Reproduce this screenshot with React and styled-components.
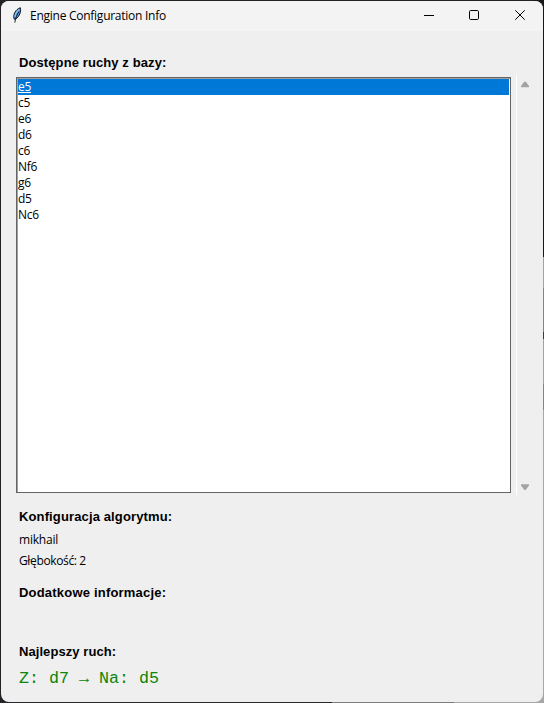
import React from "react";
import styled, { createGlobalStyle } from "styled-components";

const GlobalStyle = createGlobalStyle`
  * { box-sizing: border-box; }
  body { margin: 0; overflow: hidden; background: #242126; }
`;

const Desktop = styled.div`
  width: 544px;
  height: 703px;
  padding: 1px;
  background:
    linear-gradient(90deg, #2b282c 0 332px, #7d7d7d 332px 454px, #a6a6a6 454px) 0 702px / 544px 1px no-repeat,
    linear-gradient(#16181a 0 257px, #a2a2a2 257px 288px, #858585 288px 332px, #3a3a3a 332px 339px, #a2a2a2 339px 384px, #858585 384px 410px, #a8a8a8 410px) 534px 0 / 10px 703px no-repeat,
    #242126;
`;

const Window = styled.main`
  width: 542px;
  height: 701px;
  border-radius: 8px;
  overflow: hidden;
  background: #efefef;
  color: #000;
  font: 12px/16px "Open Sans", "Noto Sans", sans-serif;
`;

const TitleBar = styled.header`
  display: flex;
  height: 30px;
  padding: 0 0 0 10px;
  background: #f3f3f3;
`;

const Feather = styled.svg`
  flex: none;
  width: 14px;
  height: 18px;
  margin-top: 5px;
`;

const Title = styled.h1`
  flex: 1;
  margin: 0;
  padding-left: 5px;
  font-size: 12px;
  font-weight: 400;
  line-height: 30px;
  letter-spacing: -0.26px;
  white-space: nowrap;
`;

const CaptionButton = styled.button`
  display: flex;
  align-items: center;
  justify-content: center;
  flex: none;
  width: ${(p) => p.$width || 45}px;
  height: 28px;
  padding: 0;
  border: 0;
  background: transparent;
`;

const Content = styled.div`
  padding: 22px 9px 0 15px;
`;

const Heading = styled.h2`
  height: 20px;
  margin: ${(p) => p.$top || 0}px 0 0 3px;
  font: bold 13px/20px "Liberation Sans", Arial, sans-serif;
  letter-spacing: ${(p) => p.$spacing || 0}px;
`;

const ListArea = styled.div`
  display: flex;
  gap: 5px;
  height: 420px;
  margin-top: 2px;
`;

const ListBox = styled.ul`
  flex: none;
  width: 495px;
  height: 416px;
  margin: 2px 0 0;
  padding: 0 1px 1px 0;
  list-style: none;
  background: #fff;
  border: 1px solid #646464;
  box-shadow: inset 1px 1px #a0a0a0;
`;

const Move = styled.li`
  height: 16px;
  margin-left: 1px;
  line-height: 16px;
  letter-spacing: -0.3px;
  color: ${(p) => (p.$selected ? "#fff" : "#000")};
  background: ${(p) => (p.$selected ? "#0078d7" : "transparent")};
  text-decoration: ${(p) => (p.$selected ? "underline" : "none")};
  text-underline-offset: 1px;
  &:first-child { margin-top: 1px; }
`;

const ScrollBar = styled.div`
  display: flex;
  flex: none;
  flex-direction: column;
  justify-content: space-between;
  width: 17px;
  padding: 6px 0 4px 3px;
  border-left: 1px solid #fff;
`;

const Arrow = styled.svg`
  width: 10px;
  height: 7px;
  fill: #a3a3a3;
`;

const Details = styled.div`
  padding: 2px 0 0 3px;
`;

const Detail = styled.p`
  height: 21px;
  margin: 0;
  line-height: 21px;
  letter-spacing: ${(p) => p.$spacing}px;
`;

const BestMove = styled.p`
  margin: 6px 0 0 3px;
  color: #0b850b;
  font: 16.67px/22px "Liberation Mono", "Courier New", monospace;
  white-space: pre;
`;

const moves = ["e5", "c5", "e6", "d6", "c6", "Nf6", "g6", "d5", "Nc6"];

export default function App() {
  return (
    <Desktop>
      <GlobalStyle />
      <Window>
        <TitleBar>
          <Feather viewBox="0 0 14 18">
            <path d="M3.2 13.2C1.6 8.5 4.5 3.5 9.3 1.7C10.3 5.8 8.6 10.4 4.6 13Z" fill="#4b93da" stroke="#10151d" strokeWidth="1" />
            <path d="M8.2 3.4C6 5.2 4.3 8.2 4 11" fill="none" stroke="#8fc1ef" strokeWidth="1.3" />
            <path d="M8 5.5C5.8 8.8 4.6 12 3.8 16.6" fill="none" stroke="#0c0f14" strokeWidth="0.9" />
          </Feather>
          <Title>Engine Configuration Info</Title>
          <CaptionButton aria-label="Minimize">
            <svg width="11" height="10"><path d="M1 5.5h10" stroke="#000" /></svg>
          </CaptionButton>
          <CaptionButton aria-label="Maximize" $width={47}>
            <svg width="11" height="10"><rect x=".5" y=".5" width="9" height="9" rx="1.2" fill="none" stroke="#000" /></svg>
          </CaptionButton>
          <CaptionButton aria-label="Close">
            <svg width="11" height="10"><path d="M.3.3l9.4 9.4M9.7.3L.3 9.7" stroke="#000" /></svg>
          </CaptionButton>
        </TitleBar>
        <Content>
          <Heading $spacing={0.1}>Dostępne ruchy z bazy:</Heading>
          <ListArea>
            <ListBox>
              {moves.map((move, i) => <Move key={move} $selected={i === 0}>{move}</Move>)}
            </ListBox>
            <ScrollBar>
              <Arrow viewBox="0 0 10 7"><path d="M4.2.8Q5 0 5.8.8L9 5Q9.4 6.2 8.4 6.2H1.6Q.6 6.2 1 5Z" /></Arrow>
              <Arrow viewBox="0 0 10 7"><path d="M4.2 5.7Q5 6.5 5.8 5.7L9 1.5Q9.4.3 8.4.3H1.6Q.6.3 1 1.5Z" /></Arrow>
            </ScrollBar>
          </ListArea>
          <Heading $top={12} $spacing={0.13}>Konfiguracja algorytmu:</Heading>
          <Details>
            <Detail $spacing={-0.2}>mikhail</Detail>
            <Detail $spacing={-0.36}>Głębokość: 2</Detail>
          </Details>
          <Heading $top={12} $spacing={0.2}>Dodatkowe informacje:</Heading>
          <Heading $top={39} $spacing={0.07}>Najlepszy ruch:</Heading>
          <BestMove>Z: d7 → Na: d5</BestMove>
        </Content>
      </Window>
    </Desktop>
  );
}
